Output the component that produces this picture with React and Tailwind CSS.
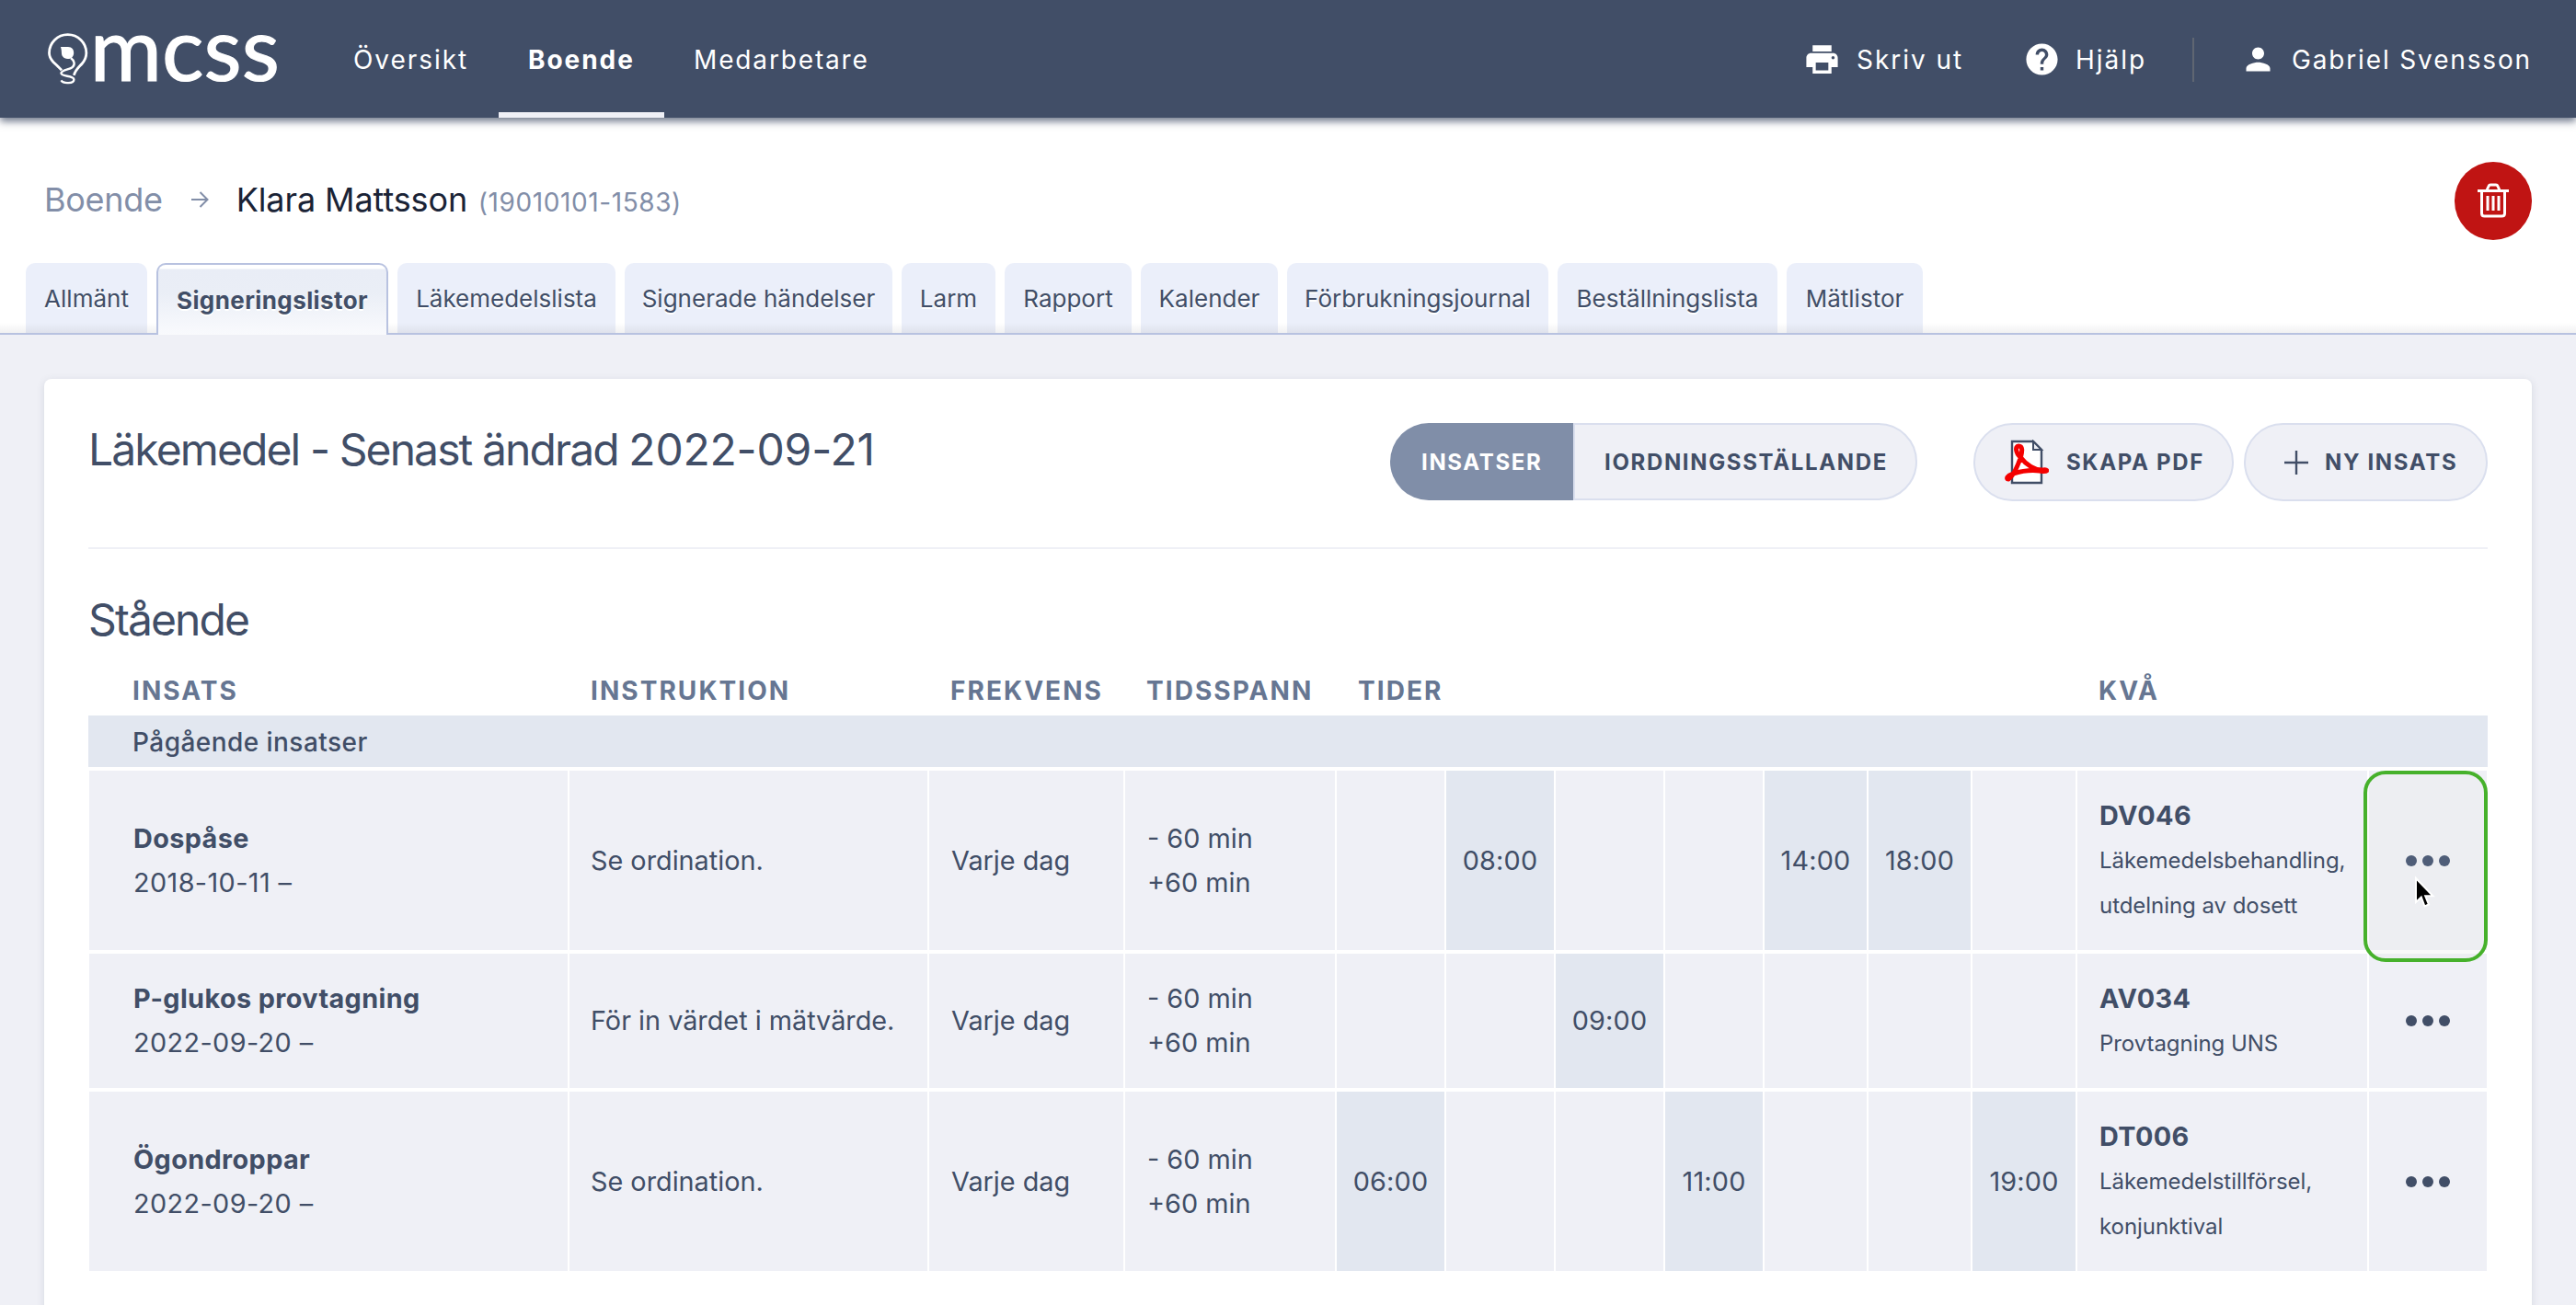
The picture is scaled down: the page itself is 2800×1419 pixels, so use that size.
import clsx from "clsx";
import { MdHelp, MdPerson, MdPrint } from "react-icons/md";

const tabs = [
  { label: "Allmänt", width: "w-[132px]" },
  { label: "Signeringslistor", width: "w-[252px]", active: true },
  { label: "Läkemedelslista", width: "w-[237px]" },
  { label: "Signerade händelser", width: "w-[291px]" },
  { label: "Larm", width: "w-[102px]" },
  { label: "Rapport", width: "w-[138px]" },
  { label: "Kalender", width: "w-[149px]" },
  { label: "Förbrukningsjournal", width: "w-[284px]" },
  { label: "Beställningslista", width: "w-[239px]" },
  { label: "Mätlistor", width: "w-[148px]" },
];

const rows = [
  {
    name: "Dospåse",
    date: "2018-10-11 –",
    instruction: "Se ordination.",
    times: ["", "08:00", "", "", "14:00", "18:00", ""],
    code: "DV046",
    description: ["Läkemedelsbehandling,", "utdelning av dosett"],
    height: "h-[195px]",
    highlighted: true,
  },
  {
    name: "P-glukos provtagning",
    date: "2022-09-20 –",
    instruction: "För in värdet i mätvärde.",
    times: ["", "", "09:00", "", "", "", ""],
    code: "AV034",
    description: ["Provtagning UNS"],
    height: "h-[146px]",
  },
  {
    name: "Ögondroppar",
    date: "2022-09-20 –",
    instruction: "Se ordination.",
    times: ["06:00", "", "", "11:00", "", "", "19:00"],
    code: "DT006",
    description: ["Läkemedelstillförsel,", "konjunktival"],
    height: "h-[195px]",
  },
];

const gridClass =
  "grid grid-cols-[520px_389px_211px_228px_117px_117px_117px_106px_111px_111px_112px_315px_128px] gap-x-[2px] px-px";

const cellClass = "flex flex-col justify-center bg-[#eff0f6]";

const pillClass =
  "flex items-center border-2 border-[#dadfee] bg-[#eff0f6] pt-px text-2xl font-bold tracking-[1.65px]";

function Logo() {
  return (
    <div className="flex w-[254px] items-start self-start text-white">
      <svg width="44" height="56" viewBox="0 0 44 56" fill="none" className="ml-[2px] mt-[36px]">
        <path
          d="M15 40.5C13 38 9 34.500 6 31.500C3.200 28.500 1.500 25.500 1.500 21.500C1.500 10.500 10.500 1.500 21.700 1.500C33 1.500 42 10.500 42 21.500C42 26 40.500 29.500 37.500 33C33.500 37.500 30 40 28.500 46"
          stroke="currentColor"
          strokeWidth="2.800"
        />
        <path
          d="M14 15H22C26.500 15 28.500 18 28.300 22C28 26 25 28.500 21.500 28C17 27.500 15 25 15 21.500C15 19 14.600 17 14 15Z"
          fill="currentColor"
        />
        <path
          d="M25 27C29 30 30 34 27 37C23 40 15 40 14.500 43.500C14 48 28.500 45.500 28.500 50.500C28.500 55 17 55.500 14.500 51.500"
          stroke="currentColor"
          strokeWidth="2.400"
        />
      </svg>
      <span className="ml-[2px] font-['Lato',sans-serif] text-[95px] leading-[102px] tracking-[0.100px] [-webkit-text-stroke:1.200px_white]">
        mcss
      </span>
    </div>
  );
}

function TopBar() {
  return (
    <header className="relative z-10 flex h-32 items-center bg-[#414e67] pl-[50px] pr-[48px] text-[28px] tracking-[1.950px] text-white shadow-[0_4px_8px_rgba(65,78,103,0.75)]">
      <Logo />
      <nav className="ml-[48px] flex h-full items-center">
        <a className="flex h-full w-[190px] items-center pl-8 pt-[2px]">Översikt</a>
        <a className="flex h-full w-[180px] items-center border-b-[6px] border-[#eff0f6] pl-8 pt-[8px] font-bold">
          Boende
        </a>
        <a className="flex h-full items-center pl-8 pt-[2px] tracking-[1.850px]">Medarbetare</a>
      </nav>
      <div className="ml-auto flex items-center pt-px">
        <MdPrint className="mr-[17px] size-[41px]" />
        <span className="w-[181px]">Skriv ut</span>
        <MdHelp className="mr-[16px] size-[41px]" />
        <span className="w-[127px]">Hjälp</span>
        <div className="h-12 w-[2px] bg-[#5f6672]" />
        <MdPerson className="ml-[50px] mr-[17px] size-[39px]" />
        <span className="tracking-[1.850px]">Gabriel Svensson</span>
      </div>
    </header>
  );
}

function Breadcrumb() {
  return (
    <div className="flex h-[158px] items-center px-12 pt-[21px]">
      <div className="mb-px flex items-baseline text-4xl">
        <span className="tracking-[-0.300px] text-[#828ea8]">Boende</span>
        <svg width="20" height="20" viewBox="0 0 20 20" fill="none" className="mx-[30px] self-center">
          <path d="M1 10H18M10.500 2L18.500 10L10.500 18" stroke="#828ea8" strokeWidth="2" />
        </svg>
        <span className="w-[263px] tracking-[-0.100px] text-[#1a2336]">Klara Mattsson</span>
        <span className="text-[28px] tracking-[0.600px] text-[#828ea8]">(19010101-1583)</span>
      </div>
      <button
        type="button"
        className="ml-auto mt-px flex h-[85px] w-[84px] items-center justify-center rounded-full bg-[#c01413]"
      >
        <svg width="34" height="38" viewBox="0 0 34 38" fill="none" stroke="white">
          <path d="M0 8.500H34" strokeWidth="3" />
          <path d="M10 8L12 3.500Q12.600 2 14 2H20Q21.400 2 22 3.500L24 8" strokeWidth="3" />
          <path d="M4.500 8V33Q4.500 36 7.500 36H26.500Q29.500 36 29.500 33V8" strokeWidth="3" />
          <path d="M11 14V30M17 14V30M23 14V30" strokeWidth="3" />
        </svg>
      </button>
    </div>
  );
}

function Tabs() {
  return (
    <div className="flex h-[78px] gap-[10px] border-b-2 border-[#b8c2e0] bg-[linear-gradient(to_top,#f1f1f2,#ffffff_11px)] pl-7 text-[26px] [text-shadow:0_2px_0_white]">
      {tabs.map((tab) => (
        <div
          key={tab.label}
          className={clsx(
            "flex items-center justify-center rounded-t-[10px] whitespace-nowrap",
            tab.width,
            tab.active
              ? "h-[78px] border-2 border-b-0 border-[#b8c2e0] bg-[linear-gradient(#ffffff_4px,#e9edf6_5px,#eaeef6_30px,#f9fafd)] font-bold tracking-[0.400px]"
              : "h-[76px] bg-[linear-gradient(to_top,#dfe2ec,#ebeffa_11px)]"
          )}
        >
          {tab.label}
        </div>
      ))}
    </div>
  );
}

function PdfIcon() {
  return (
    <svg width="48" height="50" viewBox="0 0 48 50" fill="none">
      <path d="M8 2H31L40 11V47H8Z" fill="white" stroke="#414e67" strokeWidth="2.400" />
      <path d="M31 2V11H40Z" fill="#eff0f6" stroke="#414e67" strokeWidth="2" />
      <path
        d="M17 19C12 15 11 7 15 7C20 7 19 13 17.500 19C14 29 9 40 4 43C1 43 3 39 9 37C19 34 30 33 38 34C47 36 48 32 42 33C33 34 23 27 17 19"
        stroke="#f40000"
        strokeWidth="5"
        strokeLinecap="round"
        strokeLinejoin="round"
      />
    </svg>
  );
}

function CardHeader() {
  return (
    <div className="flex h-[185px] items-start border-b-2 border-[#eff0f6] pt-12">
      <h1 className="text-5xl leading-[58px] tracking-[-1.900px]">
        Läkemedel - Senast ändrad <span className="tracking-[-0.200px]">2022-09-21</span>
      </h1>
      <div className="ml-auto flex">
        <div className="flex h-[84px]">
          <button
            type="button"
            className="w-[199px] rounded-l-[42px] bg-[#808ea8] pl-[34px] pt-px text-left text-2xl font-bold tracking-[1.650px] text-white"
          >
            INSATSER
          </button>
          <button
            type="button"
            className={clsx(pillClass, "w-[374px] rounded-r-[42px] pl-8")}
          >
            IORDNINGSSTÄLLANDE
          </button>
        </div>
        <button
          type="button"
          className={clsx(pillClass, "ml-[61px] h-[85px] w-[283px] rounded-full pl-[32px]")}
        >
          <PdfIcon />
          <span className="ml-[19px]">SKAPA PDF</span>
        </button>
        <button
          type="button"
          className={clsx(pillClass, "ml-[11px] h-[85px] w-[265px] rounded-full pl-[42px]")}
        >
          <svg width="26" height="26" viewBox="0 0 26 26">
            <path d="M13 0V26M0 13H26" stroke="#414e67" strokeWidth="2.400" />
          </svg>
          <span className="ml-[18px]">NY INSATS</span>
        </button>
      </div>
    </div>
  );
}

function Dots({ dimmed }) {
  return (
    <div className={clsx("relative z-20 flex gap-[6px]", dimmed ? "text-[#4f5d78]" : "text-[#414e67]")}>
      <span className="size-3 rounded-full bg-current" />
      <span className="size-3 rounded-full bg-current" />
      <span className="size-3 rounded-full bg-current" />
    </div>
  );
}

function Cursor() {
  return (
    <svg
      width="24"
      height="38"
      viewBox="0 0 24 38"
      className="absolute left-[49px] top-[114px] z-30"
    >
      <path
        d="M2 3V29L7.800 23.500L11.500 33.500L16 31.500L12.200 22.200H20.500Z"
        fill="black"
        stroke="white"
        strokeWidth="2"
      />
    </svg>
  );
}

function Row({ row }) {
  return (
    <div className={clsx(gridClass, row.height)}>
      <div className={clsx(cellClass, "pl-12")}>
        <span className="font-bold tracking-[0.400px]">{row.name}</span>
        <span className="tracking-[0.400px]">{row.date}</span>
      </div>
      <div className={clsx(cellClass, "pl-[23px]")}>{row.instruction}</div>
      <div className={clsx(cellClass, "pl-6")}>Varje dag</div>
      <div className={clsx(cellClass, "pl-6")}>
        <span>- 60 min</span>
        <span>+60 min</span>
      </div>
      {row.times.map((time, i) => (
        <div
          key={i}
          className={clsx(
            "flex items-center justify-center tracking-[0.200px]",
            time ? "bg-[#e2e7f0]" : "bg-[#eff0f6]"
          )}
        >
          {time}
        </div>
      ))}
      <div className={clsx(cellClass, "pl-6 leading-[49px]")}>
        <span className="font-bold tracking-[0.400px]">{row.code}</span>
        {row.description.map((line) => (
          <span key={line} className="text-2xl leading-[49px] tracking-[-0.050px]">
            {line}
          </span>
        ))}
      </div>
      <div className="relative flex items-center justify-center bg-[#eff0f6]">
        {row.highlighted && (
          <div className="absolute left-[-6px] top-0 z-10 h-[208px] w-[135px] rounded-3xl border-4 border-[#46b12b] bg-[#e8e8e8]/25" />
        )}
        <Dots dimmed={row.highlighted} />
        {row.highlighted && <Cursor />}
      </div>
    </div>
  );
}

function InsatsTable() {
  return (
    <div className="text-[28.8px] leading-[48px]">
      <div className={clsx(gridClass, "h-[58px] items-center pt-[3px] text-[28px] font-bold tracking-[2.050px] text-[#667692]")}>
        <span className="pl-[47px]">INSATS</span>
        <span className="pl-[23px]">INSTRUKTION</span>
        <span className="pl-[23px]">FREKVENS</span>
        <span className="pl-[23px]">TIDSSPANN</span>
        <span className="col-span-7 pl-[23px]">TIDER</span>
        <span className="pl-[23px]">KVÅ</span>
      </div>
      <div className="mb-1 flex h-14 items-center bg-[#e2e7f0] pl-12 pt-[2px] text-[28px] font-medium tracking-[0.450px]">
        Pågående insatser
      </div>
      <div className="flex flex-col gap-1">
        {rows.map((row) => (
          <Row key={row.name} row={row} />
        ))}
      </div>
    </div>
  );
}

function App() {
  return (
    <div className="h-[1419px] w-[2800px] overflow-hidden bg-white font-['Inter',sans-serif] text-[#414e67]">
      <TopBar />
      <Breadcrumb />
      <Tabs />
      <main className="h-[1055px] bg-[#eff0f6] px-12 pt-12">
        <section className="h-[1100px] rounded-t-lg bg-white px-12 shadow-[0_2px_8px_rgba(65,78,103,0.15)]">
          <CardHeader />
          <h2 className="pb-[17px] pt-[48px] text-5xl leading-[58px] tracking-[-1.900px]">
            Stående
          </h2>
          <InsatsTable />
        </section>
      </main>
    </div>
  );
}

export default App;
